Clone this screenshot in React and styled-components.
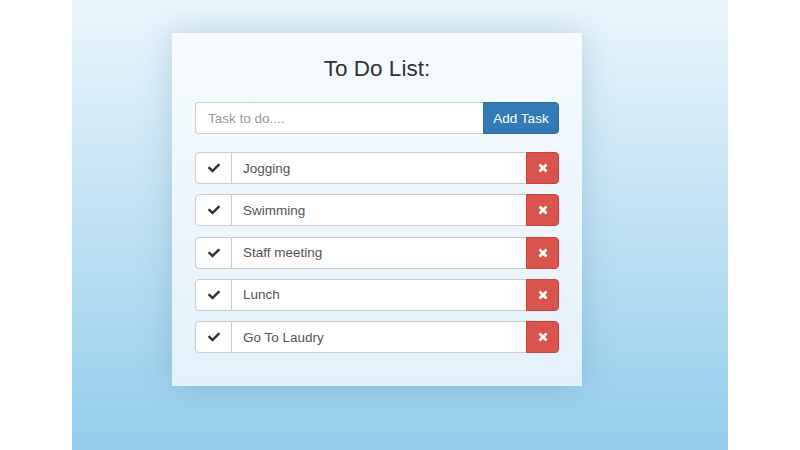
import React, { useState } from 'react';
import styled, { createGlobalStyle } from 'styled-components';
import { FaCheck } from 'react-icons/fa';

const GlobalStyle = createGlobalStyle`
  html, body {
    margin: 0;
    padding: 0;
    background: #fff;
    font-family: "Liberation Sans", Arial, Helvetica, sans-serif;
  }
  * { box-sizing: border-box; }
`;

const Page = styled.div`
  width: 800px;
  height: 450px;
  display: flex;
  justify-content: center;
`;

const Backdrop = styled.div`
  width: 656px;
  height: 450px;
  padding: 33px 0 0 100px;
  background: linear-gradient(to bottom, #ebf6fc 0%, #c4e3f4 45%, #93cdeb 100%);
`;

const Card = styled.div`
  width: 410px;
  height: 353px;
  padding: 23px 23px 0;
  background: linear-gradient(to bottom, #f6fbfe 0%, #e3f1fa 100%);
  box-shadow: 0 0 30px rgba(60, 110, 150, 0.25);
`;

const Title = styled.h1`
  margin: 0 0 20px;
  height: 26px;
  line-height: 26px;
  text-align: center;
  font-size: 22.5px;
  font-weight: 400;
  color: #333;
`;

const InputRow = styled.form`
  display: flex;
  height: 32px;
  margin: 0 0 18px;
`;

const TaskInput = styled.input`
  flex: 1;
  min-width: 0;
  height: 32px;
  padding: 0 12px;
  border: 1px solid #ccc;
  border-right: none;
  border-radius: 4px 0 0 4px;
  font-family: inherit;
  font-size: 13.5px;
  color: #555;
  background: #fff;
  outline: none;
  &::placeholder { color: #999; }
`;

const AddButton = styled.button`
  width: 76px;
  height: 32px;
  border: 1px solid #2e6da4;
  border-radius: 0 4px 4px 0;
  background: #337ab7;
  color: #fff;
  font-family: inherit;
  font-size: 13.5px;
  padding: 0;
  cursor: pointer;
`;

const List = styled.ul`
  list-style: none;
  margin: 0;
  padding: 0;
  display: flex;
  flex-direction: column;
  gap: 10.25px;
`;

const Item = styled.li`
  display: flex;
  height: 32px;
`;

const CheckAddon = styled.span`
  width: 37px;
  display: flex;
  align-items: center;
  justify-content: center;
  border: 1px solid #ccc;
  border-radius: 4px 0 0 4px;
  background: #fff;
  color: #333;
  font-size: 12px;
`;

const ItemText = styled.span`
  flex: 1;
  display: flex;
  align-items: center;
  padding-left: 11px;
  border-top: 1px solid #ccc;
  border-bottom: 1px solid #ccc;
  background: #fff;
  color: #555;
  font-size: 13.5px;
`;

const RemoveButton = styled.button`
  width: 33px;
  display: flex;
  align-items: center;
  justify-content: center;
  padding: 0;
  border: 1px solid #d43f3a;
  border-radius: 0 4px 4px 0;
  background: #d9534f;
  color: #fff;
  cursor: pointer;
`;

const RemoveIcon = () => (
  <svg width='10' height='10' viewBox='0 0 10 10'>
    <path d='M1.5 1.5 L8.5 8.5 M8.5 1.5 L1.5 8.5' stroke='#fff' strokeWidth='2.8' strokeLinecap='butt' />
  </svg>
);

const initialTasks = ['Jogging', 'Swimming', 'Staff meeting', 'Lunch', 'Go To Laudry'];

export default function App() {
  const [tasks, setTasks] = useState(initialTasks);
  const [text, setText] = useState('');

  const addTask = (e) => {
    e.preventDefault();
    if (!text.trim()) return;
    setTasks([...tasks, text.trim()]);
    setText('');
  };

  return (
    <>
      <GlobalStyle />
      <Page>
        <Backdrop>
          <Card>
            <Title>To Do List:</Title>
            <InputRow onSubmit={addTask}>
              <TaskInput
                placeholder='Task to do....'
                value={text}
                onChange={(e) => setText(e.target.value)}
              />
              <AddButton type='submit'>Add Task</AddButton>
            </InputRow>
            <List>
              {tasks.map((task, i) => (
                <Item key={i}>
                  <CheckAddon>
                    <FaCheck />
                  </CheckAddon>
                  <ItemText>{task}</ItemText>
                  <RemoveButton onClick={() => setTasks(tasks.filter((_, j) => j !== i))}>
                    <RemoveIcon />
                  </RemoveButton>
                </Item>
              ))}
            </List>
          </Card>
        </Backdrop>
      </Page>
    </>
  );
}
